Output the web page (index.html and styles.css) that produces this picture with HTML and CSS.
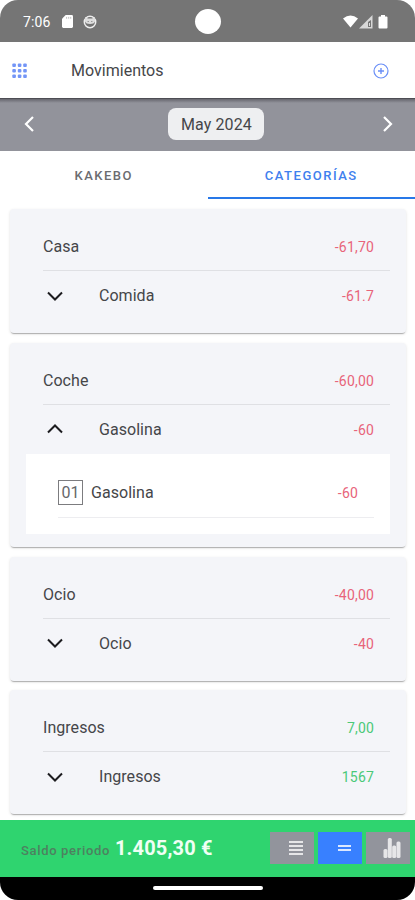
FILE: index.html
```html
<!DOCTYPE html>
<html lang="es">
<head>
  <meta charset="UTF-8">
  <meta name="viewport" content="width=device-width, initial-scale=1.0">
  <title>Movimientos</title>
  <link rel="stylesheet" href="styles.css">
</head>
<body>
  <div class="phone">
    <div class="status-bar">
      <span class="time">7:06</span>
      <svg class="sd" width="11" height="13" viewBox="0 0 12 14"><path d="M4 0h6.500Q12 0 12 1.500v11Q12 14 10.500 14h-9Q0 14 0 12.500V4z" fill="#fff"/><path d="M5 2v2M7.300 2v2M9.500 2v2" stroke="#bbb"/></svg>
      <svg class="face" width="14" height="14" viewBox="0 0 14 14"><circle cx="7" cy="7" r="5.700" fill="none" stroke="#eee" stroke-width="1.500"/><path d="M2 2l3 1.500h4L12 2v4.500q-1 2.500-5 2.500T2 6.500z" fill="#dedede"/><path d="M4.500 6.500h1.500M8 6.500h1.500" stroke="#999"/></svg>
      <span class="camera"></span>
      <svg class="signals" width="46" height="16" viewBox="0 0 46 16">
        <path d="M0 4.500Q7.500-1.500 15 4.500L7.500 13.500z" fill="#fff"/>
        <path d="M16 14.500L29.500 1v13.500z" fill="#d8d8d8"/>
        <path d="M25 8v5h3V6z" fill="#757575"/><path d="M26 9h1v3h-1z" fill="#ddd"/>
        <path d="M38 1h4v1.500h1.500q1 0 1 1v10q0 1-1 1h-7q-1 0-1-1v-10q0-1 1-1H38z" fill="#fff"/>
      </svg>
    </div>

    <header>
      <svg width="15" height="16" viewBox="0 0 15 16" fill="#7395f7">
        <rect x="0.300" y="0.500" width="3.600" height="3.600" rx="1"/><rect x="5.800" y="0.500" width="3.600" height="3.600" rx="1"/><rect x="11.200" y="0.500" width="3.600" height="3.600" rx="1"/>
        <rect x="0.300" y="6" width="3.600" height="3.600" rx="1"/><rect x="5.800" y="6" width="3.600" height="3.600" rx="1"/><rect x="11.200" y="6" width="3.600" height="3.600" rx="1"/>
        <rect x="0.300" y="11.500" width="3.600" height="3.600" rx="1"/><rect x="5.800" y="11.500" width="3.600" height="3.600" rx="1"/><rect x="11.200" y="11.500" width="3.600" height="3.600" rx="1"/>
      </svg>
      <h1>Movimientos</h1>
      <svg width="16" height="16" viewBox="0 0 16 16" fill="none" stroke="#6a8ff7" stroke-width="1.200"><circle cx="8" cy="8" r="7"/><path d="M8 5v6M5 8h6" stroke-width="1.400"/></svg>
    </header>

    <div class="month-bar">
      <svg width="12" height="18" viewBox="0 0 12 18"><path d="M10 2L3 9l7 7" fill="none" stroke="#fff" stroke-width="2.200"/></svg>
      <span class="month">May 2024</span>
      <svg width="12" height="18" viewBox="0 0 12 18"><path d="M2 2l7 7-7 7" fill="none" stroke="#fff" stroke-width="2.200"/></svg>
    </div>

    <nav>
      <a class="tab">KAKEBO</a>
      <a class="tab active">CATEGORÍAS</a>
    </nav>

    <main>
      <section class="card">
        <div class="row"><span>Casa</span><span class="amount">-61,70</span></div>
        <div class="row sub">
          <svg class="chevron" width="18" height="12" viewBox="0 0 18 12"><path d="M2 2.500l7 7 7-7"/></svg>
          <span>Comida</span><span class="amount">-61.7</span>
        </div>
      </section>

      <section class="card">
        <div class="row"><span>Coche</span><span class="amount">-60,00</span></div>
        <div class="row sub">
          <svg class="chevron" width="18" height="12" viewBox="0 0 18 12"><path d="M2 9.500l7-7 7 7"/></svg>
          <span>Gasolina</span><span class="amount">-60</span>
        </div>
        <div class="detail">
          <div class="entry"><span class="day">01</span><span>Gasolina</span><span class="amount">-60</span></div>
        </div>
      </section>

      <section class="card">
        <div class="row"><span>Ocio</span><span class="amount">-40,00</span></div>
        <div class="row sub">
          <svg class="chevron" width="18" height="12" viewBox="0 0 18 12"><path d="M2 2.500l7 7 7-7"/></svg>
          <span>Ocio</span><span class="amount">-40</span>
        </div>
      </section>

      <section class="card">
        <div class="row"><span>Ingresos</span><span class="amount income">7,00</span></div>
        <div class="row sub">
          <svg class="chevron" width="18" height="12" viewBox="0 0 18 12"><path d="M2 2.500l7 7 7-7"/></svg>
          <span>Ingresos</span><span class="amount income">1567</span>
        </div>
      </section>
    </main>

    <footer>
      <span class="balance-label">Saldo periodo</span>
      <span class="balance">1.405,30 €</span>
      <div class="buttons">
        <button><svg width="14" height="16" viewBox="0 0 14 16"><path d="M0 2h14M0 6h14M0 10h14M0 14h14" stroke="#e6e6e8" stroke-width="2"/></svg></button>
        <button class="selected"><svg width="13" height="16" viewBox="0 0 13 16"><path d="M0 6h13M0 10h13" stroke="#dce8ff" stroke-width="2"/></svg></button>
        <button class="chart"><svg width="18" height="20" viewBox="0 0 18 20" fill="#e6e6e8"><rect x="0.500" y="11" width="4" height="9" rx="1.500"/><rect x="4.800" y="0" width="4" height="20" rx="1.500"/><rect x="9.200" y="7.500" width="4" height="12.500" rx="1.500"/><rect x="13.500" y="3.500" width="4" height="16.500" rx="1.500"/></svg></button>
      </div>
    </footer>

    <div class="gesture-bar"><span></span></div>
  </div>
</body>
</html>
```
FILE: styles.css
```css
* {
  box-sizing: border-box;
}

body {
  margin: 0;
  background: #fff;
  font-family: Roboto, sans-serif;
  color: #454649;
}

svg {
  display: block;
  flex-shrink: 0;
}

.phone {
  width: 415px;
  height: 900px;
  display: flex;
  flex-direction: column;
  overflow: hidden;
  border-radius: 18px;
}

.status-bar {
  position: relative;
  height: 42px;
  flex-shrink: 0;
  display: flex;
  align-items: center;
  padding: 1px 26px 0 23px;
  background: #757575;
  color: #fff;
}

.time {
  width: 39px;
  font-size: 14px;
  letter-spacing: 0.1px;
}

.face {
  margin-left: 10px;
}

.signals {
  margin-left: auto;
}

.camera {
  position: absolute;
  top: 9px;
  left: 195px;
  width: 26px;
  height: 25px;
  border-radius: 50%;
  background: #fff;
}

header {
  height: 56px;
  flex-shrink: 0;
  display: flex;
  align-items: center;
  padding: 1px 26px 0 12px;
}

header h1 {
  flex: 1;
  margin: 0 0 0 44px;
  font-size: 16px;
  font-weight: 400;
  letter-spacing: 0.02px;
}

.month-bar {
  height: 53px;
  flex-shrink: 0;
  display: flex;
  align-items: center;
  padding: 0 21px 2px 23px;
  background: linear-gradient(#66666e, #92939b 4px);
  border-top: 1px solid #4d4d54;
}

.month {
  height: 32px;
  margin: 0 auto 0 133px;
  padding: 0 12px 0 13px;
  border-radius: 8px;
  background: #eeeff1;
  font-size: 16px;
  line-height: 33px;
  letter-spacing: 0.1px;
}

nav {
  height: 48px;
  flex-shrink: 0;
  display: flex;
}

.tab {
  flex: 1;
  border-bottom: 2px solid transparent;
  font-size: 13px;
  font-weight: 500;
  line-height: 49px;
  letter-spacing: 1.5px;
  text-align: center;
  color: #6b6c70;
}

.tab.active {
  color: #3f80ee;
  border-color: #2878e8;
}

main {
  flex: 1;
  display: flex;
  flex-direction: column;
  gap: 9.800px;
  padding: 10px 9px 0 10px;
}

.card {
  padding: 13px 16px;
  border-radius: 4px;
  background: #f4f5f9;
  box-shadow: 0 2px 1px -1px rgba(0, 0, 0, 0.25), 0 1px 3px rgba(0, 0, 0, 0.13);
}

.row {
  display: flex;
  align-items: center;
  height: 49px;
  margin-left: 17px;
  padding: 1px 16px 0 0;
  border-bottom: 1px solid #dfe0e4;
  font-size: 16px;
  letter-spacing: 0.04px;
}

.row.sub {
  border-color: transparent;
}

.chevron {
  margin: 0 35px 0 3px;
  fill: none;
  stroke: #1c1c1f;
  stroke-width: 2;
}

.amount {
  margin-left: auto;
  padding-top: 1px;
  font-size: 14px;
  letter-spacing: 0.18px;
  color: #e8647a;
}

.amount.income {
  color: #4bc978;
}

.detail {
  height: 80px;
  padding: 14px 16px 0 32px;
  background: #fff;
}

.entry {
  display: flex;
  align-items: center;
  height: 50px;
  padding-right: 16px;
  border-bottom: 1px solid #ededf0;
  font-size: 16px;
  letter-spacing: 0.04px;
}

.day {
  width: 25px;
  height: 25px;
  margin-right: 8px;
  border: 1px solid #7c7c7f;
  line-height: 23px;
  text-align: center;
  color: #66676a;
}

footer {
  height: 57px;
  flex-shrink: 0;
  display: flex;
  align-items: center;
  padding: 0 5px 0 21px;
  background: #2fd46f;
}

.balance-label {
  width: 94px;
  margin-top: 4px;
  font-size: 13px;
  font-weight: 500;
  letter-spacing: 0.66px;
  color: #4d8160;
}

.balance {
  margin-top: -1px;
  font-size: 20px;
  font-weight: 700;
  letter-spacing: 0.15px;
  color: #effff4;
}

.buttons {
  display: flex;
  gap: 4px;
  margin: 0 0 1px auto;
}

button {
  display: flex;
  align-items: center;
  justify-content: flex-end;
  width: 44px;
  height: 32px;
  padding: 0 11px 0 0;
  border: 0;
  background: #92949c;
}

button.chart {
  padding-right: 9px;
}

button.selected {
  background: #3880ff;
}

.gesture-bar {
  display: flex;
  justify-content: center;
  height: 23px;
  flex-shrink: 0;
  padding-top: 9px;
  background: #000;
}

.gesture-bar span {
  width: 110px;
  height: 4px;
  border-radius: 2px;
  background: #fff;
}
```
